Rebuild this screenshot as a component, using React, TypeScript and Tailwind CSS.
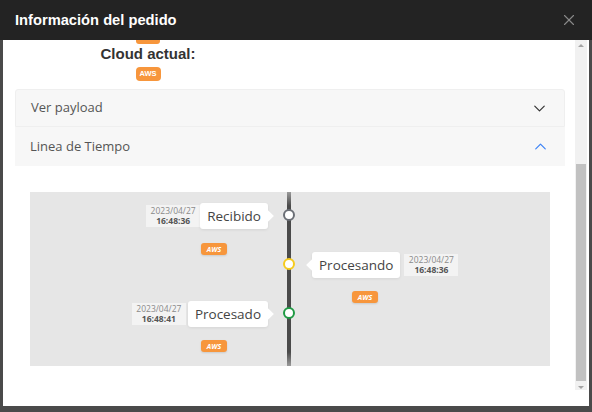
import { ChevronDown, ChevronUp, X } from "lucide-react";

function Badge({ italic = false }: { italic?: boolean }) {
  return (
    <span
      className={
        "flex items-center justify-center w-[26px] h-[12px] rounded-[3px] bg-[#f7963c] text-white font-bold text-[7px] leading-none shadow-[0_1px_2px_rgba(0,0,0,0.12)] " +
        (italic ? "italic" : "")
      }
    >
      AWS
    </span>
  );
}

function DateBox({ date, time }: { date: string; time: string }) {
  return (
    <div className="w-[54px] h-[22px] bg-[#f3f3f3] flex flex-col items-center justify-center leading-[10px] text-[8.5px] font-['Open_Sans',sans-serif]">
      <span className="text-[#8a8a8a]">{date}</span>
      <span className="text-[#555] font-bold">{time}</span>
    </div>
  );
}

function Callout({ label, side }: { label: string; side: "left" | "right" }) {
  return (
    <div className="relative h-[26px] flex items-center px-[7px] bg-white rounded-[3px] shadow-[0_1px_3px_rgba(0,0,0,0.08)]">
      <span className="relative z-10 text-[13.5px] text-[#444] font-['Open_Sans',sans-serif]">
        {label}
      </span>
      <div
        className={
          "absolute top-1/2 -translate-y-1/2 w-[9px] h-[9px] bg-white rotate-45 " +
          (side === "left" ? "-right-[4px]" : "-left-[4px]")
        }
      />
    </div>
  );
}

function Dot({ ring }: { ring: string }) {
  return (
    <div
      className={
        "absolute left-[253px] top-[6px] w-[12px] h-[12px] rounded-full bg-white border-[2.5px] z-10 " +
        ring
      }
    />
  );
}

export default function App() {
  return (
    <div className="w-[592px] h-[412px] bg-[#4a4a4a] overflow-hidden font-['Liberation_Sans',sans-serif]">
      {/* header */}
      <div className="h-[40px] bg-[#232323] flex items-center justify-between pl-[15px] pr-[14px]">
        <h1 className="text-white font-bold text-[14.7px]">Información del pedido</h1>
        <X size={18} strokeWidth={1.5} className="text-[#8a8a8a]" />
      </div>

      <div className="ml-[3px] w-[586px] h-[366px] bg-white flex flex-col">
        <div className="h-[350px] flex">
          {/* scroll content */}
          <div className="w-[572px] overflow-hidden">
            <div className="w-[290px] flex flex-col items-center">
              <div className="-mt-[6px] h-[10px] w-[24px] rounded-[3px] bg-[#f7963c]" />
              <div className="mt-[1px] text-[15px] font-bold text-[#333] leading-[17px]">
                Cloud actual:
              </div>
              <span className="mt-[5px] inline-flex items-center justify-center w-[25px] h-[14px] rounded-[4px] bg-[#f7963c] text-white font-bold text-[7.5px]">
                AWS
              </span>
            </div>

            {/* accordion */}
            <div className="ml-[12px] mt-[8px] w-[550px] font-['Open_Sans',sans-serif]">
              <div className="h-[38px] bg-[#f7f7f7] border border-[#efefef] rounded-t-[3px] flex items-center justify-between pl-[15px] pr-[15px]">
                <span className="text-[13px] text-[#555]">Ver payload</span>
                <ChevronDown size={19} strokeWidth={1.5} className="text-[#333]" />
              </div>
              <div className="h-[39px] bg-[#f7f7f7] flex items-center justify-between pl-[15px] pr-[15px]">
                <span className="text-[13px] text-[#555]">Linea de Tiempo</span>
                <ChevronUp size={19} strokeWidth={1.5} className="text-[#3b82f6]" />
              </div>

              <div className="px-[15px] pt-[26px]">
                <div className="relative w-[520px] h-[174px] bg-[#e6e6e6] pt-[11px]">
                  <div className="absolute left-[257px] top-0 bottom-0 w-[4px] bg-[linear-gradient(to_bottom,#9a9a9a,#4a4a4a_8%,#4a4a4a_92%,#9a9a9a)]" />

                  {/* Recibido */}
                  <div className="relative h-[49px] flex">
                    <Dot ring="border-[#6b6f76]" />
                    <div className="w-[260px] flex flex-col items-end">
                      <div className="flex items-center pr-[22px]">
                        <DateBox date="2023/04/27" time="16:48:36" />
                        <Callout label="Recibido" side="left" />
                      </div>
                      <div className="flex mt-[14px] pr-[63px]">
                        <Badge italic />
                      </div>
                    </div>
                  </div>

                  {/* Procesando */}
                  <div className="relative h-[49px] flex">
                    <Dot ring="border-[#f6cb1d]" />
                    <div className="w-[260px]" />
                    <div className="w-[260px] flex flex-col items-start">
                      <div className="flex items-center gap-[4px] pl-[22px]">
                        <Callout label="Procesando" side="right" />
                        <DateBox date="2023/04/27" time="16:48:36" />
                      </div>
                      <div className="flex mt-[13px] pl-[62px]">
                        <Badge italic />
                      </div>
                    </div>
                  </div>

                  {/* Procesado */}
                  <div className="relative h-[49px] flex">
                    <Dot ring="border-[#1f9a44]" />
                    <div className="w-[260px] flex flex-col items-end">
                      <div className="flex items-center gap-[2px] pr-[22px]">
                        <DateBox date="2023/04/27" time="16:48:41" />
                        <Callout label="Procesado" side="left" />
                      </div>
                      <div className="flex mt-[13px] pr-[63px]">
                        <Badge italic />
                      </div>
                    </div>
                  </div>
                </div>
              </div>
            </div>
          </div>

          {/* scrollbar */}
          <div className="w-[12px] bg-[#f1f1f1] flex flex-col items-center">
            <div className="mt-[4px] w-0 h-0 border-l-[3px] border-r-[3px] border-b-[3px] border-l-transparent border-r-transparent border-b-[#a3a3a3]" />
            <div className="mt-[117px] w-[10px] h-[217px] bg-[#c1c1c1]" />
            <div className="mt-[5px] w-0 h-0 border-l-[3px] border-r-[3px] border-t-[3px] border-l-transparent border-r-transparent border-t-[#a3a3a3]" />
          </div>
        </div>
      </div>
    </div>
  );
}
